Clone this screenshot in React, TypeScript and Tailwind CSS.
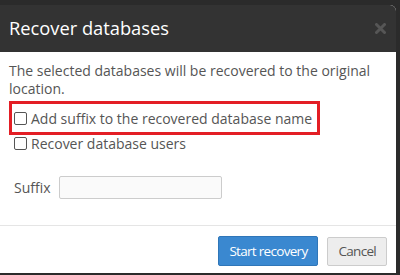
import React from 'react';

const CloseIcon = () =>
<svg width="11" height="11" viewBox="0 0 11 11" fill="none">
    <path d="M1.5 1.5L9.5 9.5M9.5 1.5L1.5 9.5" stroke="#565656" strokeWidth="3" strokeLinecap="round" />
  </svg>;

const Checkbox = ({ label, className }: {label: string;className: string;}) =>
<label className={`flex items-center ${className}`}>
    <span className="w-[13px] h-[13px] border border-[#555] rounded-[2px] bg-white shrink-0" />
    <span className="ml-[4px]">{label}</span>
  </label>;

export default function App() {
  return (
    <div
      className="w-[400px] h-[275px] bg-[#2b2b2b] pt-[5px] pr-[4px] overflow-hidden"
      style={{ fontFamily: '"Open Sans", "Liberation Sans", sans-serif' }}>
      <div className="bg-white rounded-tr-[6px] overflow-hidden h-[268px] text-[14px] text-[#555]">
        {/* Header */}
        <div className="h-[47px] bg-[#333] flex items-center justify-between pl-[9px] pr-[10px]">
          <h1 className="text-white text-[18.3px] leading-none mt-[-1px]">Recover databases</h1>
          <CloseIcon />
        </div>

        {/* Body */}
        <div className="px-[9px] pt-[10px]">
          <p className="leading-[18px]">
            The selected databases will be recovered to the original location.
          </p>
          <div className="mt-[3px] w-[311px] border-[3px] border-[#e31e25] h-[34px] flex items-center pl-[2px]">
            <Checkbox label="Add suffix to the recovered database name" className="h-[16px]" />
          </div>
          <Checkbox label="Recover database users" className="h-[16px] pl-[5px]" />
          <div className="flex items-center mt-[25px] pl-[5px]">
            <span className="w-[45px]">Suffix</span>
            <input className="w-[163px] h-[23px] border border-[#ccc] rounded-[2px] bg-[#fafafa] outline-none" />
          </div>
        </div>

        {/* Footer */}
        <div className="mt-[26px] border-t border-[#e5e5e5] flex justify-end items-start gap-[9px] pt-[10px] pr-[9px] text-[13.5px] tracking-[-0.7px]">
          <button className="h-[30px] px-[10px] bg-[#3a88d0] border border-[#2f76b8] rounded-[2px] text-white">
            Start recovery
          </button>
          <button className="h-[29px] mt-[1px] px-[10px] bg-[#ededed] border border-[#ccc] rounded-[2px] text-[#555]">
            Cancel
          </button>
        </div>
      </div>
    </div>);

}
